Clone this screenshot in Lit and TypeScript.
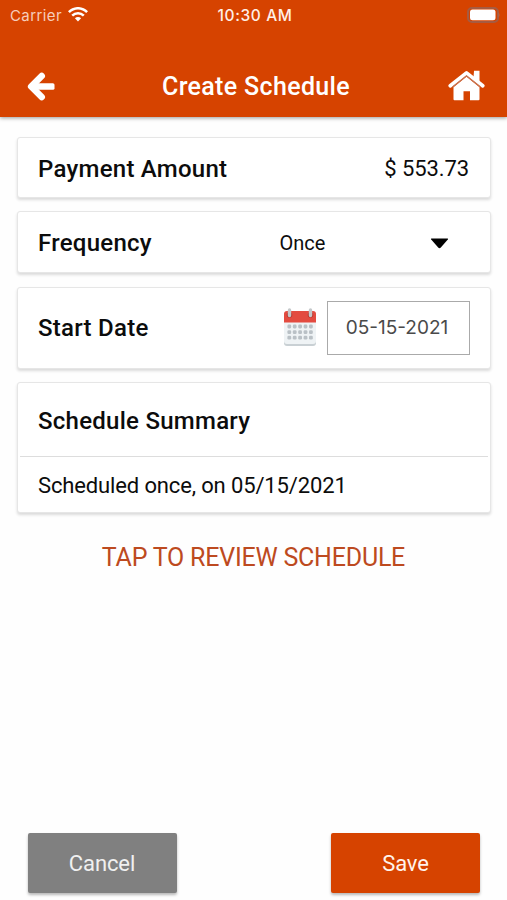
import { LitElement, html, css, svg } from "lit";
import { customElement } from "lit/decorators.js";

const dots = [0, 1, 2].flatMap((r) =>
  [0, 1, 2, 3, 4].map((c) => svg`<rect x=${4.4 + c * 5.4} y=${17.6 + r * 5.6} width="3.800" height="3.800" rx="1.300" fill="#bac1c6"/>`)
);

@customElement("app-root")
export class AppRoot extends LitElement {
  static styles = css`
    :host { display: flex; flex-direction: column; height: 900px; box-sizing: border-box; background: #fefefe; color: #0c0c0c; font-family: Roboto, sans-serif; overflow: hidden; }
    * { box-sizing: border-box; }
    svg { display: block; flex: none; }
    header { height: 117px; flex: none; background: #d64300; color: #fff; box-shadow: 0 1px 4px rgba(0,0,0,.4); }
    .status { height: 29px; display: grid; grid-template-columns: 1fr auto 1fr; align-items: center; padding: 0 7px 0 10px; font-family: Inter, sans-serif; font-size: 15px; }
    .carrier { display: flex; align-items: center; gap: 6px; color: #f6cdbb; letter-spacing: .4px; }
    .carrier span, .time { padding-top: 1px; }
    .time { font-size: 15.5px; font-weight: 500; letter-spacing: .6px; color: #fff0e8; }
    .battery { justify-self: end; }
    .bar { height: 88px; display: grid; grid-template-columns: 1fr auto 1fr; align-items: center; padding: 0 22px 0 26px; }
    .bar .home { justify-self: end; }
    h1 { margin: 0; font-size: 25px; line-height: 30px; font-weight: 500; letter-spacing: .34px; padding: 27px 0 0 1px; }
    .back { margin-top: 26px; }
    .home { margin-top: 24px; }
    main { padding: 20px 16px 0 17px; display: flex; flex-direction: column; gap: 13px; }
    .card { background: #fff; border: 1px solid #e6e6e6; border-radius: 3px; box-shadow: 0 2px 3px rgba(0,0,0,.14); padding: 0 20px; display: flex; align-items: center; justify-content: space-between; }
    .amount { height: 61px; padding-top: 2px; padding-right: 21px; }
    .frequency { height: 62px; margin-bottom: 1px; padding-top: 1px; }
    .date { height: 82px; }
    .summary { height: 131px; display: block; padding: 0 2px; }
    .label { font-size: 24px; line-height: 30px; font-weight: 500; letter-spacing: .26px; }
    .value { font-size: 22px; line-height: 28px; letter-spacing: -.1px; }
    .select { width: 190.500px; display: flex; align-items: center; justify-content: space-between; padding-right: 21px; font-size: 20px; }
    .select svg { margin-top: 1px; }
    .picker { display: flex; align-items: center; gap: 10px; }
    .picker svg { margin-top: -2px; }
    .field { width: 143px; height: 54px; border: 1px solid #aaa; display: flex; align-items: center; justify-content: center; font: 19px Inter, sans-serif; color: #4a4a4a; padding: 0 3px 1px 0; }
    .summary-head { height: 74px; padding: 2px 18px 0; display: flex; align-items: center; border-bottom: 1px solid #ddd; }
    .summary-body { height: 56px; padding: 0 18px; display: flex; align-items: center; font-size: 22px; letter-spacing: -.14px; }
    .review { margin-top: 28px; line-height: 34px; text-align: center; color: #bd4a20; font-size: 25px; letter-spacing: -.22px; }
    footer { margin: auto 27px 7px 28px; display: flex; justify-content: space-between; }
    .button { width: 149px; height: 60px; border-radius: 2px; display: flex; align-items: center; justify-content: center; color: #fff3ec; background: #d64300; font-size: 22px; letter-spacing: -.1px; box-shadow: 0 2px 3px rgba(0,0,0,.28); }
    .cancel { background: #808080; color: #f0f0f0; padding-right: 1px; }
  `;

  render() {
    return html`
      <header>
        <div class="status">
          <div class="carrier"><span>Carrier</span>
            <svg width="20" height="15" viewBox="0 0 20 15" fill="none" stroke="#fff" stroke-width="2.5"><path d="M.9 5.200C6-.1 14-.1 19.100 5.200M4.200 8.600c3.300-3.300 8.300-3.300 11.600 0"/><path d="M10 14.500 6.900 11.300c1.700-1.600 4.500-1.600 6.200 0z" fill="#fff" stroke="none"/></svg>
          </div>
          <div class="time">10:30 AM</div>
          <svg class="battery" width="33" height="16" viewBox="0 0 33 16"><rect x="1" y="1" width="30" height="14" rx="4" fill="none" stroke="#a55b42" stroke-width="2"/><rect x="3" y="2.500" width="25.500" height="10.800" rx="2.500" fill="#fff"/><path d="M31.500 5.500q2 2.500 0 5z" fill="#b3694f"/></svg>
        </div>
        <div class="bar">
          <svg class="back" width="29" height="29" viewBox="0 0 29 29" fill="none" stroke="#fff"><path d="M15.700 4 5.200 14.500l10.500 10.500" stroke-width="6.600" stroke-linecap="round" stroke-linejoin="round"/><rect x="6" y="11.200" width="22.500" height="6.600" rx="1.600" fill="#fff" stroke="none"/></svg>
          <h1>Create Schedule</h1>
          <svg class="home" width="37" height="31" viewBox="0 0 37 31" fill="#fff"><path d="M2.300 15.700 18.500 2.900 34.700 15.700" fill="none" stroke="#fff" stroke-width="3.800" stroke-linejoin="round" stroke-linecap="round"/><path d="M26 .8H31.500v11.500L25.500 8z"/><path d="M18.500 6.700 31.500 17.300v11.900q0 1-1 1H22v-9h-6.500v9H6.500q-1 0-1-1V17.300z"/><path d="M4.500 17 18.500 5.800 32.500 17" fill="none" stroke="#c87554" stroke-width="1.200"/></svg>
        </div>
      </header>
      <main>
        <section class="card amount"><span class="label">Payment Amount</span><span class="value">$ 553.73</span></section>
        <section class="card frequency"><span class="label">Frequency</span>
          <div class="select"><span>Once</span><svg width="19" height="11" viewBox="0 0 19 11"><path d="M1.500.5h16q1 0 .3 1l-7 8q-1.300 1.300-2.600 0l-7-8q-.7-1 .3-1z" fill="#000"/></svg></div>
        </section>
        <section class="card date"><span class="label">Start Date</span>
          <div class="picker">
            <svg width="34" height="40" viewBox="0 0 34 40"><rect x="1" y="5" width="32" height="34" rx="3" fill="#c9d0d4"/><path d="M1 14h32v20q0 3-3 3H4q-3 0-3-3z" fill="#eff3f5"/><path d="M1 15.500V7q0-3 3-3h26q3 0 3 3v8.500z" fill="#e34b40"/>${dots}<circle cx="6.500" cy="8" r="2.800" fill="#b83c34"/><circle cx="27.500" cy="8" r="2.800" fill="#b83c34"/><path d="M6.500 3v5.500M27.500 3v5.500" stroke="#c4c8ca" stroke-width="3.400" stroke-linecap="round"/></svg>
            <div class="field">05-15-2021</div>
          </div>
        </section>
        <section class="card summary">
          <div class="summary-head label">Schedule Summary</div>
          <div class="summary-body">Scheduled once, on 05/15/2021</div>
        </section>
      </main>
      <div class="review">TAP TO REVIEW SCHEDULE</div>
      <footer><div class="button cancel">Cancel</div><div class="button">Save</div></footer>
    `;
  }
}
